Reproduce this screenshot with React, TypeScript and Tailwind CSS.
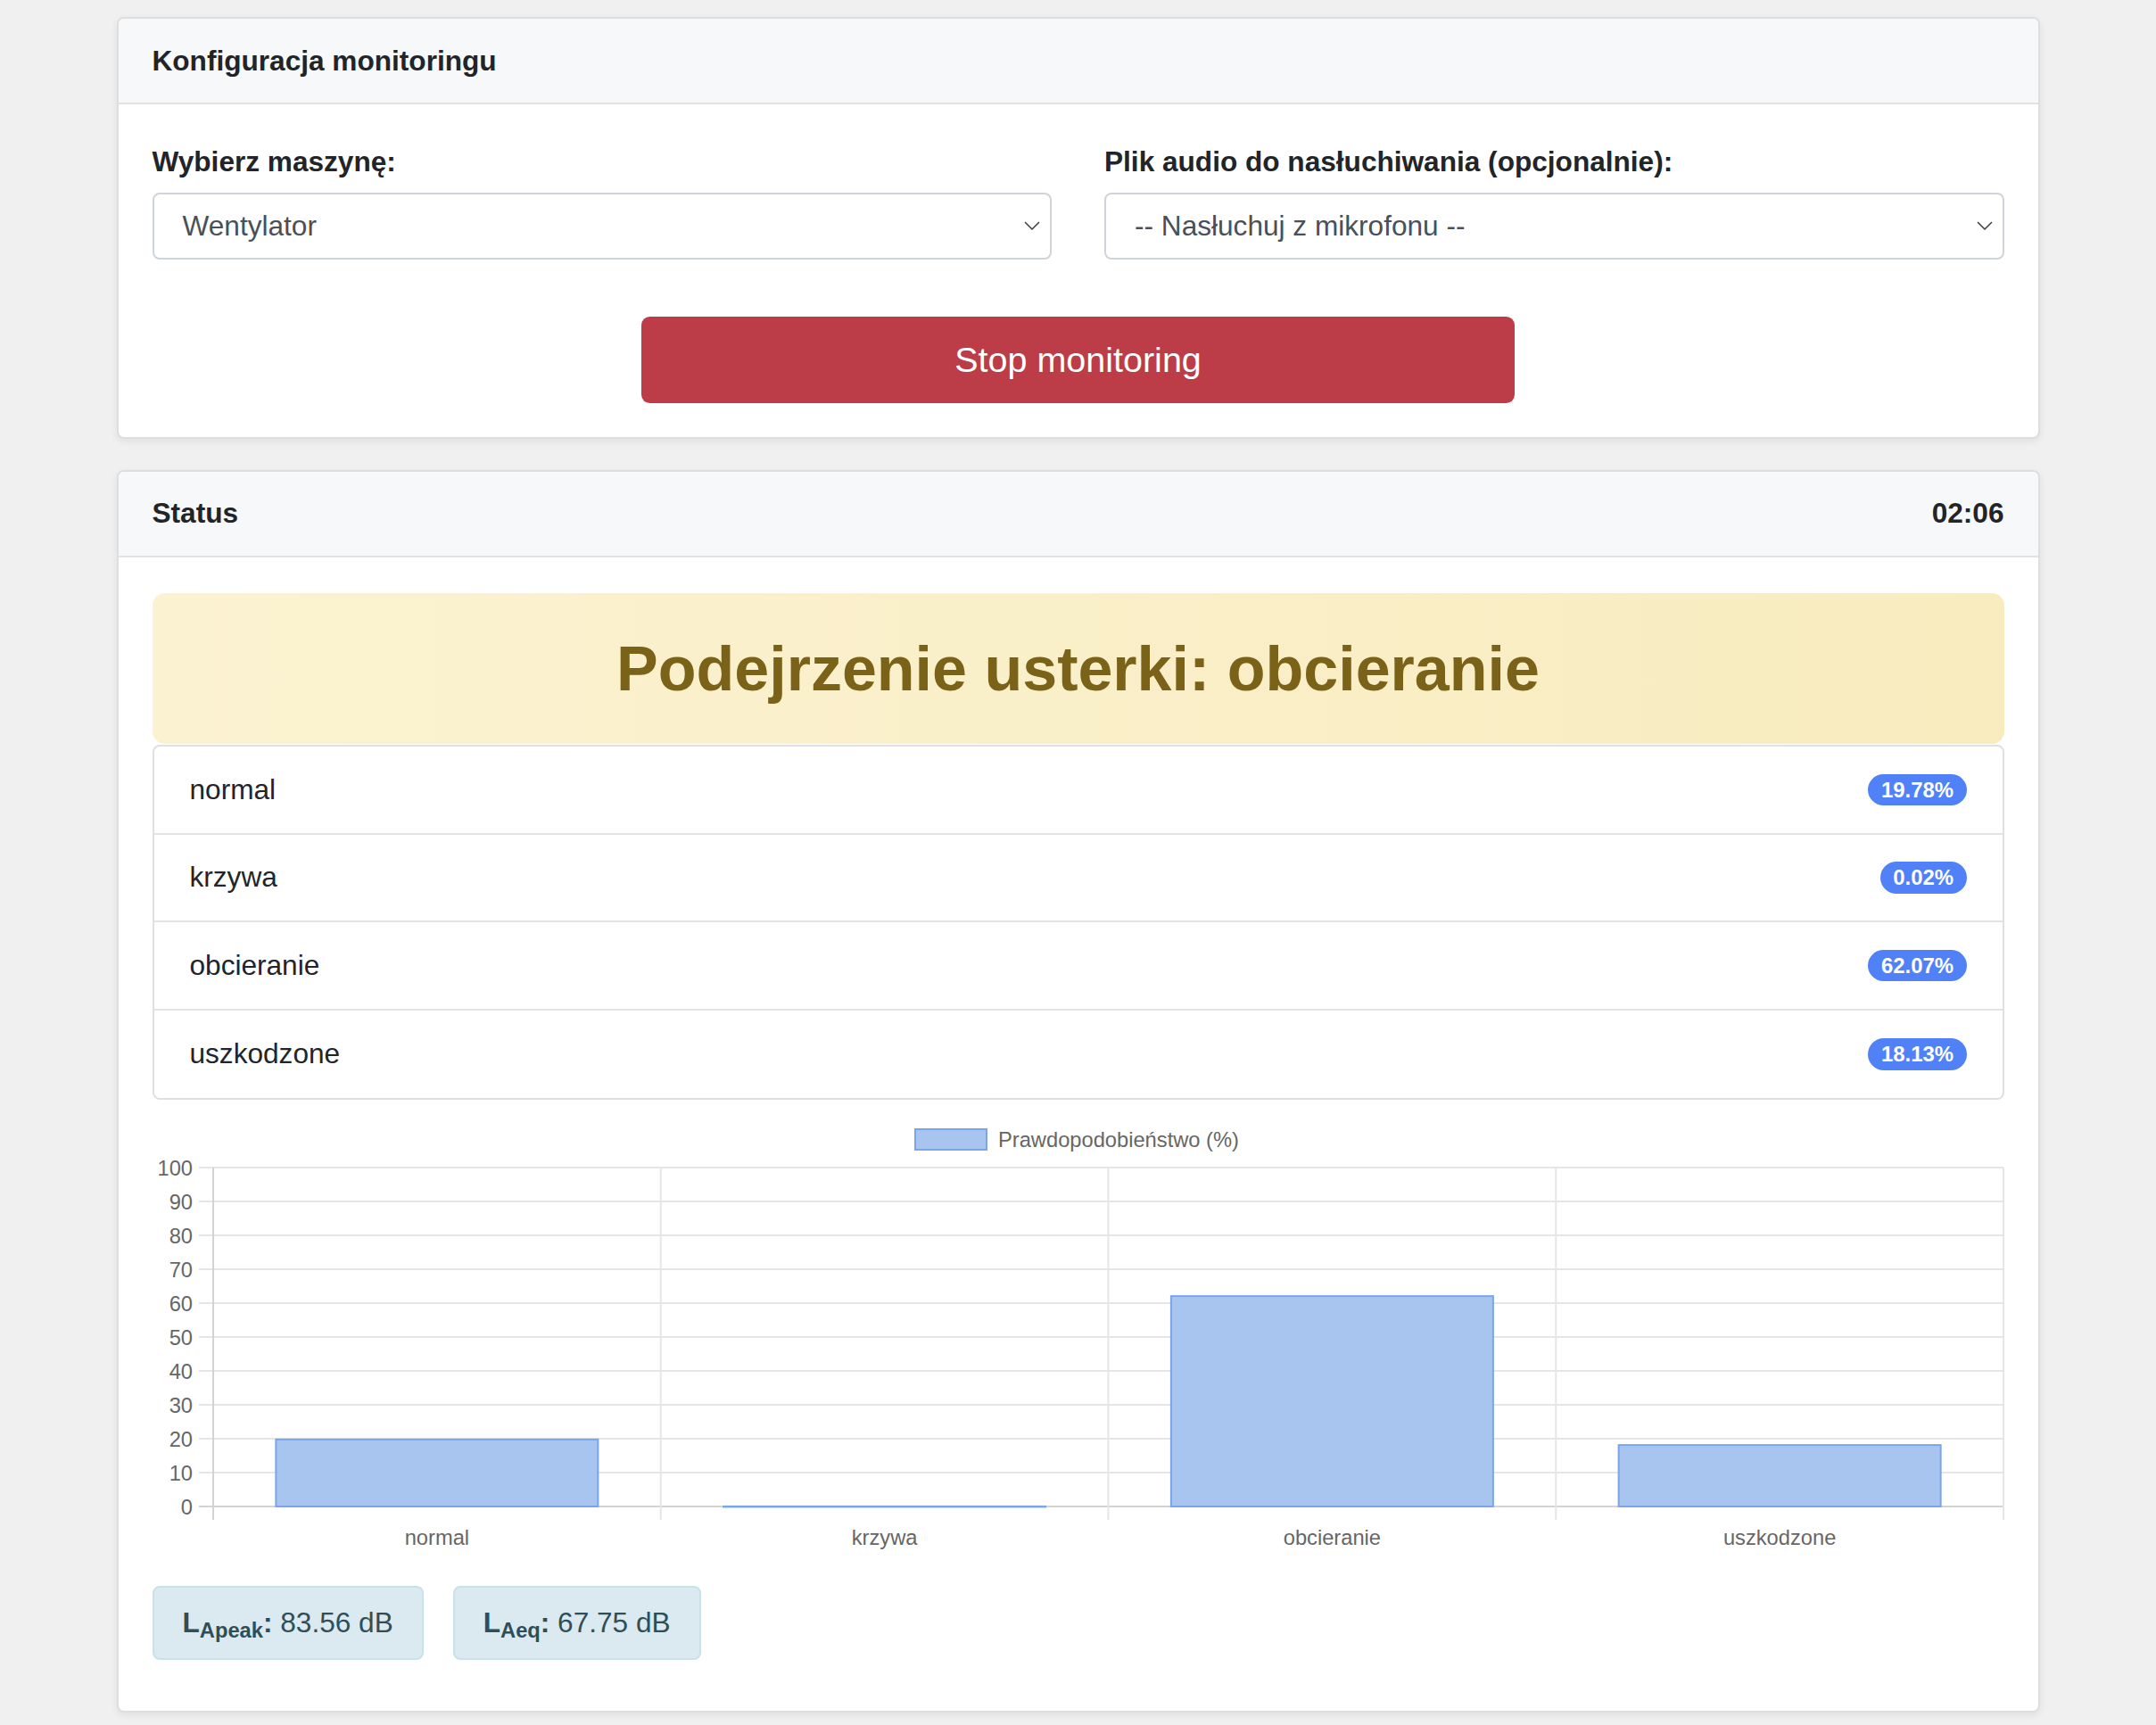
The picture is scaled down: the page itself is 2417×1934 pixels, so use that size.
import React from "react"

const wyniki = [
  { nazwa: "normal", wartosc: 19.78 },
  { nazwa: "krzywa", wartosc: 0.02 },
  { nazwa: "obcieranie", wartosc: 62.07 },
  { nazwa: "uszkodzone", wartosc: 18.13 },
]

function Chevron() {
  return (
    <svg width="18" height="10" viewBox="0 0 18 10" className="shrink-0">
      <polyline points="1,1 9,9 17,1" fill="none" stroke="#3d4247" strokeWidth="1.5" />
    </svg>
  )
}

function FakeSelect({ value }: { value: string }) {
  return (
    <div className="flex h-[75px] items-center justify-between rounded-[8px] border-2 border-[#ced4da] bg-white pl-[32px] pr-[11px] text-[31.6px] leading-[47.4px] text-[#495057]">
      <span>{value}</span>
      <Chevron />
    </div>
  )
}

function CardHeader({ children }: { children: React.ReactNode }) {
  return (
    <div className="flex items-center justify-between border-b-2 border-[#e1e2e4] bg-[#f7f8f9] px-[38px] py-[23.5px] text-[31.6px] font-bold leading-[47.4px] text-[#212529]">
      {children}
    </div>
  )
}

function Wykres() {
  const X0 = 68
  const X1 = 2075
  const Y0 = 429
  const step = 38
  const cw = (X1 - X0) / 4
  const bw = 361
  return (
    <svg width="2076" height="485" viewBox="0 0 2076 485" className="block">
      {/* legenda */}
      <rect x="855" y="6" width="80" height="23" fill="#a7c5ef" stroke="#7aa5eb" strokeWidth="2" />
      <text x="948" y="26" fontSize="23.7" fill="#666">Prawdopodobieństwo (%)</text>

      {/* siatka pozioma */}
      {Array.from({ length: 11 }).map((_, i) => (
        <line
          key={"h" + i}
          x1={52}
          x2={X1}
          y1={Y0 - i * step}
          y2={Y0 - i * step}
          stroke={i === 0 ? "#d3d3d3" : "#e6e6e6"}
          strokeWidth="2"
        />
      ))}
      {/* siatka pionowa */}
      {Array.from({ length: 5 }).map((_, j) => (
        <line
          key={"v" + j}
          x1={X0 + j * cw}
          x2={X0 + j * cw}
          y1={Y0 - 10 * step}
          y2={444}
          stroke={j === 0 ? "#d3d3d3" : "#e6e6e6"}
          strokeWidth="2"
        />
      ))}
      {/* os Y */}
      {Array.from({ length: 11 }).map((_, i) => (
        <text key={"t" + i} x={45} y={Y0 - i * step + 8.5} fontSize="23.7" fill="#666" textAnchor="end">
          {i * 10}
        </text>
      ))}
      {/* slupki */}
      {wyniki.map((w, j) => {
        const h = w.wartosc * (step / 10)
        return (
          <rect
            key={w.nazwa}
            x={X0 + j * cw + (cw - bw) / 2}
            y={Y0 - h}
            width={bw}
            height={Math.max(h, 0.5)}
            fill="#a7c5ef"
            stroke="#7aa5eb"
            strokeWidth="2"
          />
        )
      })}
      {/* os X */}
      {wyniki.map((w, j) => (
        <text key={"x" + w.nazwa} x={X0 + (j + 0.5) * cw} y={472} fontSize="23.7" fill="#666" textAnchor="middle">
          {w.nazwa}
        </text>
      ))}
    </svg>
  )
}

export default function App() {
  return (
    <div className="min-h-screen bg-[#f0f0f0] pt-[19px] pb-[17px] font-['Liberation_Sans',Arial,sans-serif] text-[#212529]">
      <div className="mx-auto w-[2156px]">
        {/* konfiguracja */}
        <div className="overflow-hidden rounded-[8px] border-2 border-[#dedede] bg-white shadow-[0_3px_8px_rgba(0,0,0,0.07)]">
          <CardHeader>Konfiguracja monitoringu</CardHeader>
          <div className="px-[38px] pt-[41px] pb-[38px]">
            <div className="grid grid-cols-2 gap-x-[59px]">
              <div>
                <label className="mb-[10px] block text-[31.6px] font-bold leading-[47.4px]">Wybierz maszynę:</label>
                <FakeSelect value="Wentylator" />
              </div>
              <div>
                <label className="mb-[10px] block text-[31.6px] font-bold leading-[47.4px]">
                  Plik audio do nasłuchiwania (opcjonalnie):
                </label>
                <FakeSelect value="-- Nasłuchuj z mikrofonu --" />
              </div>
            </div>
            <div className="mt-[64px] flex justify-center">
              <button className="h-[97px] w-[979px] rounded-[9.5px] bg-[#bc3d47] text-[39.5px] leading-[59px] text-white">
                Stop monitoring
              </button>
            </div>
          </div>
        </div>

        {/* status */}
        <div className="mt-[35px] overflow-hidden rounded-[8px] border-2 border-[#dedede] bg-white shadow-[0_3px_8px_rgba(0,0,0,0.07)]">
          <CardHeader>
            <span>Status</span>
            <span>02:06</span>
          </CardHeader>
          <div className="px-[38px] pt-[40px] pb-[57px]">
            <div className="flex h-[169px] items-center justify-center rounded-[14px] bg-gradient-to-r from-[#fbf2d1] to-[#f8ecbf]">
              <h1 className="text-[70px] font-bold leading-[84px] text-[#7b6219]">Podejrzenie usterki: obcieranie</h1>
            </div>

            <div className="mt-[1px] divide-y-2 divide-[#e3e3e3] rounded-[8px] border-2 border-[#e0e0e0]">
              {wyniki.map((w) => (
                <div key={w.nazwa} className="flex h-[98.5px] items-center justify-between px-[40px]">
                  <span className="text-[31.6px] leading-[47.4px]">{w.nazwa}</span>
                  <span className="rounded-full bg-[#5181f7] px-[14.5px] py-[6px] text-[23.9px] font-bold leading-none text-white">
                    {w.wartosc.toFixed(2)}%
                  </span>
                </div>
              ))}
            </div>

            <div className="mt-[27px]">
              <Wykres />
            </div>

            <div className="mt-[33px] flex gap-[33px]">
              <div className="rounded-[8px] border-2 border-[#c9e2ea] bg-[#daeaf0] px-[32px] py-[15.8px] text-[31.6px] leading-[47.4px] text-[#2f4e58]">
                <b>
                  L<sub>Apeak</sub>:
                </b>{" "}
                83.56 dB
              </div>
              <div className="rounded-[8px] border-2 border-[#c9e2ea] bg-[#daeaf0] px-[32px] py-[15.8px] text-[31.6px] leading-[47.4px] text-[#2f4e58]">
                <b>
                  L<sub>Aeq</sub>:
                </b>{" "}
                67.75 dB
              </div>
            </div>
          </div>
        </div>
      </div>
    </div>
  )
}
